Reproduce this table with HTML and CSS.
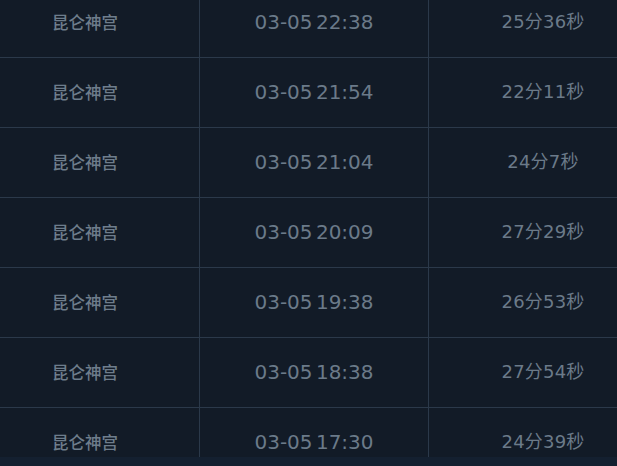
FILE: index.html
```html
<!DOCTYPE html>
<html lang="zh">
<head>
<meta charset="utf-8">
<link rel="stylesheet" href="styles.css">
</head>
<body>
<div class="panel">
  <div class="scroller">
    <table class="records">
      <tbody>
        <tr><td class="name">昆仑神宫</td><td class="time">03-05 22:38</td><td class="dur">25分36秒</td></tr>
        <tr><td class="name">昆仑神宫</td><td class="time">03-05 21:54</td><td class="dur">22分11秒</td></tr>
        <tr><td class="name">昆仑神宫</td><td class="time">03-05 21:04</td><td class="dur">24分7秒</td></tr>
        <tr><td class="name">昆仑神宫</td><td class="time">03-05 20:09</td><td class="dur">27分29秒</td></tr>
        <tr><td class="name">昆仑神宫</td><td class="time">03-05 19:38</td><td class="dur">26分53秒</td></tr>
        <tr><td class="name">昆仑神宫</td><td class="time">03-05 18:38</td><td class="dur">27分54秒</td></tr>
        <tr><td class="name">昆仑神宫</td><td class="time">03-05 17:30</td><td class="dur">24分39秒</td></tr>
      </tbody>
    </table>
  </div>
  <div class="footer"></div>
</div>
</body>
</html>
```
FILE: styles.css
```css
html, body {
  margin: 0;
  padding: 0;
  background: #121b27;
  overflow: hidden;
}
.panel {
  width: 617px;
  height: 466px;
  display: flex;
  flex-direction: column;
  overflow: hidden;
}
.scroller {
  height: 457px;
  overflow: hidden;
  flex: none;
}
.footer {
  flex: 1;
  background: #142030;
}
.records {
  border-collapse: collapse;
  table-layout: fixed;
  width: 686px;
  margin: -12px 0 0 -29px;
  color: #6b7a89;
}
.records td {
  height: 67px;
  padding: 0 0 2px;
  line-height: 24px;
  text-align: center;
  vertical-align: middle;
  border-bottom: 1px solid #2b394a;
  border-right: 1px solid #2b394a;
}
.records td:last-child {
  border-right: none;
}
.records td.name {
  width: 228px;
  font-family: "Noto Sans CJK SC", sans-serif;
  font-size: 16.5px;
  font-weight: 500;
  color: #6e7d8c;
}
.records td.time {
  width: 228px;
  font-family: "DejaVu Sans", "Noto Sans CJK SC", sans-serif;
  font-size: 20px;
  word-spacing: -3px;
}
.records td.dur {
  font-family: "DejaVu Sans", "Noto Sans CJK SC", sans-serif;
  font-size: 18px;
  letter-spacing: 0.2px;
}
```
